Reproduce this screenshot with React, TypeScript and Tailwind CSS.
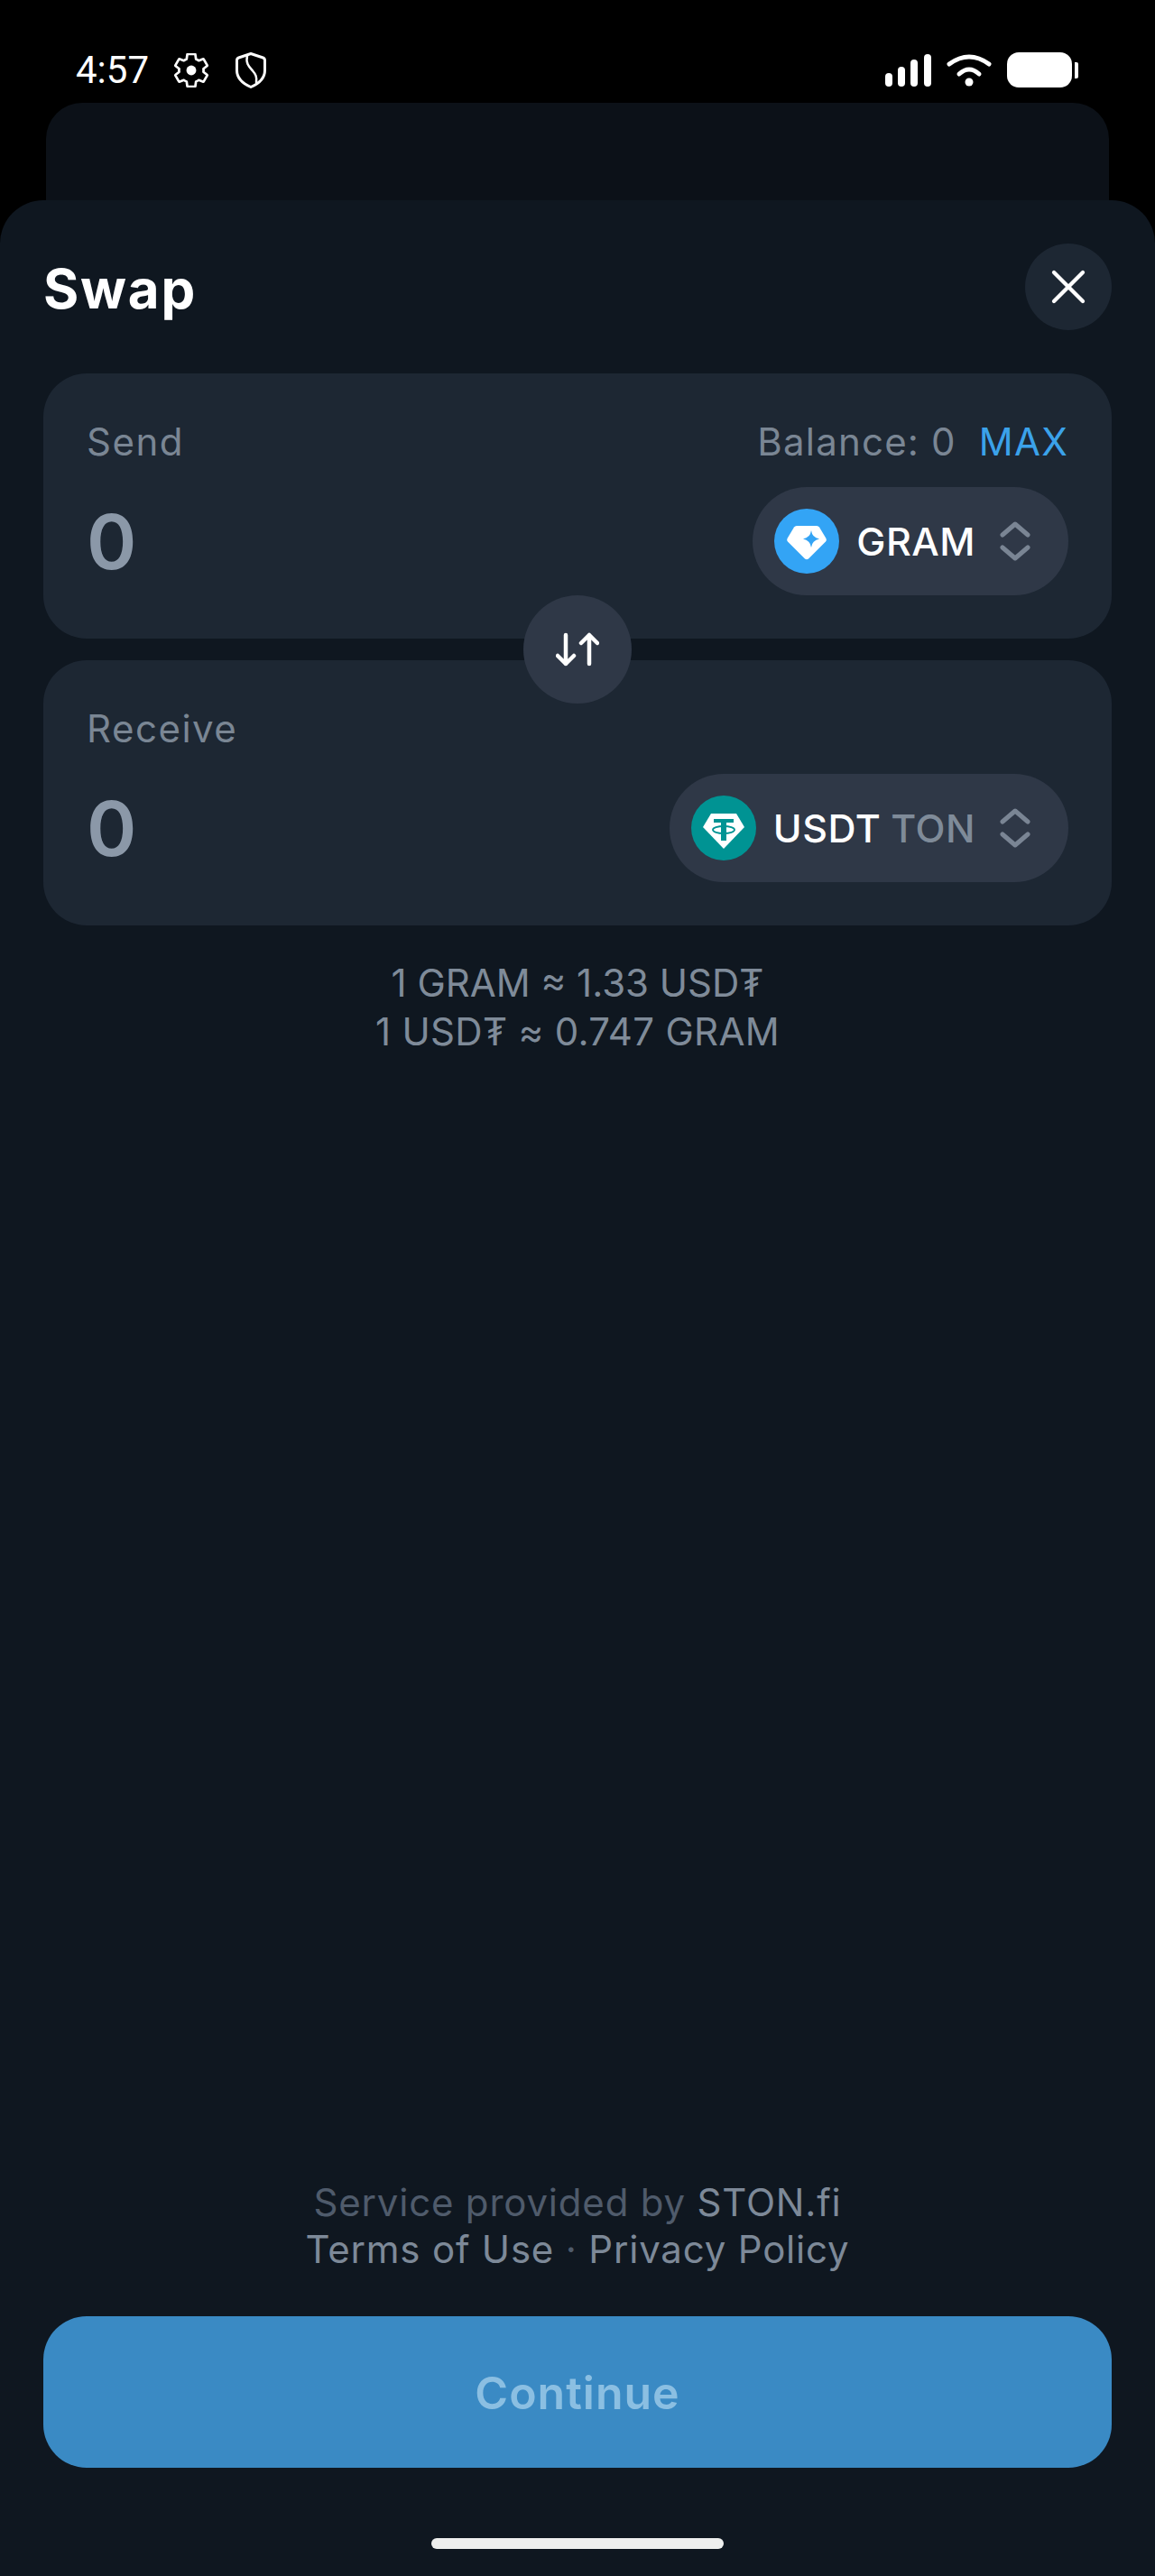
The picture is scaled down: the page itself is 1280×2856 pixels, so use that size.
import { X } from 'lucide-react'

const GEAR =
  'M19.43 12.98c.04-.32.07-.64.07-.98s-.03-.66-.07-.98l2.11-1.65c.19-.15.24-.42.12-.64l-2-3.46c-.12-.22-.39-.3-.61-.22l-2.49 1c-.52-.4-1.08-.73-1.69-.98l-.38-2.65C14.46 2.18 14.25 2 14 2h-4c-.25 0-.46.18-.49.42l-.38 2.65c-.61.25-1.17.59-1.69.98l-2.49-1c-.23-.09-.49 0-.61.22l-2 3.46c-.13.22-.07.49.12.64l2.11 1.65c-.04.32-.07.65-.07.98s.03.66.07.98l-2.11 1.65c-.19.15-.24.42-.12.64l2 3.46c.12.22.39.3.61.22l2.49-1c.52.4 1.08.73 1.69.98l.38 2.65c.03.24.24.42.49.42h4c.25 0 .46-.18.49-.42l.38-2.65c.61-.25 1.17-.59 1.69-.98l2.49 1c.23.09.49 0 .61-.22l2-3.46c.12-.22.07-.49-.12-.64l-2.11-1.65z'

const StatusBar = () => (
  <div className="flex h-[114px] shrink-0 items-start justify-between pr-[85px] pl-[84px] pt-[58px]">
    <div className="flex items-center">
      <span className="font-['Roboto',sans-serif] text-[42px] leading-[40px] text-white">
        4:57
      </span>
      <svg width="38" height="38" viewBox="1.5 1.5 21 21" className="ml-[28px]" fill="none">
        <path d={GEAR} stroke="white" strokeWidth="1.5" strokeLinejoin="round" />
        <circle cx="12" cy="12" r="3" fill="white" />
      </svg>
      <svg width="34" height="40" viewBox="0 0 34 40" className="ml-[30px]" fill="none" stroke="white" strokeWidth="3" strokeLinejoin="round" strokeLinecap="round">
        <path d="M17 1.5 30.5 6Q32.5 6.8 32.5 9V20C32.5 29 25 35 17 38.5 9 35 1.5 29 1.5 20V9Q1.5 6.8 3.5 6Z" />
        <path d="M13 4C11 12 15 16 19 20.500 22 24 24 27 23 33.500" strokeWidth="2.500" />
      </svg>
    </div>
    <div className="flex items-start">
      <svg width="51" height="38" viewBox="0 0 51 38" fill="white">
        <rect x="0" y="23" width="8" height="15" rx="4" />
        <rect x="14" y="16" width="8" height="22" rx="4" />
        <rect x="28" y="8" width="8" height="30" rx="4" />
        <rect x="43" y="2" width="8" height="36" rx="4" />
      </svg>
      <svg width="50" height="38" viewBox="0 0 50 38" className="ml-[17px]" fill="none" stroke="white" strokeWidth="5" strokeLinecap="round">
        <path d="M3 13Q25-3 47 13" />
        <path d="M14 24Q25 14 36 24" />
        <circle cx="25" cy="33" r="4.500" fill="white" stroke="none" />
      </svg>
      <div className="ml-[17px] h-[39px] w-[72px] rounded-[13px] bg-white" />
      <div className="mt-[11px] ml-[3px] h-[18px] w-[4px] rounded-r-[2px] bg-white" />
    </div>
  </div>
)

const Chevrons = () => (
  <svg width="34" height="44" viewBox="0 0 34 44" fill="none" stroke="#7a8594" strokeWidth="5" strokeLinecap="round" strokeLinejoin="round">
    <path d="M3 15 17 3 31 15" />
    <path d="M3 29 17 41 31 29" />
  </svg>
)

const GramIcon = () => (
  <svg width="72" height="72" viewBox="0 0 72 72">
    <circle cx="36" cy="36" r="36" fill="#33a4f5" />
    <path
      d="M25 19H47Q49 19 50 20.500L57.500 33Q58.500 35 57 36.500L38 55.500Q36 57 34 55.500L15 36.500Q13.500 35 14.500 33L22 20.500Q23 19 25 19Z"
      fill="white"
    />
    <path d="M41 24Q42 32 50 33.500 42 35 41 43 40 35 32 33.500 40 32 41 24Z" fill="#33a4f5" />
  </svg>
)

const TetherIcon = () => (
  <svg width="72" height="72" viewBox="0 0 72 72">
    <circle cx="36" cy="36" r="36" fill="#009393" />
    <path d="M22 20H50L59 35 36 59 13 35Z" fill="white" />
    <rect x="25" y="26" width="22" height="4" fill="#009393" />
    <rect x="33" y="30" width="6" height="20" fill="#009393" />
    <ellipse cx="36" cy="38" rx="12" ry="4" fill="none" stroke="#009393" strokeWidth="1.800" />
  </svg>
)

type TokenPillProps = {
  icon: React.ReactNode
  symbol: string
  network?: string
}

const TokenPill = ({ icon, symbol, network }: TokenPillProps) => (
  <div className="flex h-[120px] items-center rounded-full bg-[#2f3847] pr-[42px] pl-[24px]">
    {icon}
    <span className="ml-[19px] text-[43px] leading-none font-medium tracking-[0.5px] text-white">
      {symbol}
      {network && <span className="ml-[11px] text-[#7f8b99]">{network}</span>}
    </span>
    <span className="ml-[27px]">
      <Chevrons />
    </span>
  </div>
)

type SwapCardProps = {
  label: string
  right?: React.ReactNode
  pill: React.ReactNode
}

const SwapCard = ({ label, right, pill }: SwapCardProps) => (
  <div className="h-[294px] rounded-[48px] bg-[#1d2733] px-[48px] pt-[50px]">
    <div className="flex h-[52px] items-center justify-between text-[42px] leading-[52px] tracking-[1.5px] text-[#7a8694]">
      <span>{label}</span>
      {right}
    </div>
    <div className="mt-[24px] flex items-center justify-between">
      <span className="pt-[2px] text-[84px] leading-none font-semibold text-[#8b98a8]">0</span>
      {pill}
    </div>
  </div>
)

export default function App() {
  return (
    <div className="flex h-[2856px] w-[1280px] flex-col bg-black font-['Inter',sans-serif]">
      <StatusBar />
      <div className="mx-[51px] h-[108px] shrink-0 rounded-t-[40px] bg-[#0c1118]" />

      <div className="flex flex-1 flex-col rounded-t-[48px] bg-[#0f1720] px-[48px] pt-[48px] pb-[30px]">
        <div className="flex h-[96px] items-center justify-between">
          <h1 className="pt-[3px] text-[60px] font-bold tracking-[1.8px] text-white">Swap</h1>
          <button className="flex h-[96px] w-[96px] items-center justify-center rounded-full bg-[#1d2733]">
            <X size={64} color="white" strokeWidth={1.6} />
          </button>
        </div>

        <div className="relative mt-[48px] flex flex-col gap-[24px]">
          <SwapCard
            label="Send"
            right={
              <span className="tracking-[1.2px]">
                Balance: 0
                <span className="ml-[25px] text-[#3ba2ea]">MAX</span>
              </span>
            }
            pill={<TokenPill icon={<GramIcon />} symbol="GRAM" />}
          />
          <SwapCard
            label="Receive"
            pill={<TokenPill icon={<TetherIcon />} symbol="USDT" network="TON" />}
          />
          <div className="absolute top-[246px] left-[532px] flex h-[120px] w-[120px] items-center justify-center rounded-full bg-[#2f3847]">
            <svg width="48" height="38" viewBox="0 0 48 38" fill="none" stroke="white" strokeWidth="4.500" strokeLinecap="round" strokeLinejoin="round">
              <path d="M11 3V35M2 26 11 35 20 26" />
              <path d="M37 35V3M28 12 37 3 46 12" />
            </svg>
          </div>
        </div>

        <div className="mt-[37px] text-center text-[42px] leading-[54px] text-[#7f8b99]">
          <div>1 GRAM ≈ 1.33 USD₮</div>
          <div className="tracking-[0.3px]">1 USD₮ ≈ 0.747 GRAM</div>
        </div>

        <div className="mt-auto text-center text-[42px] leading-[52px] tracking-[0.8px] text-[#4f5b6b]">
          <div>
            Service provided by <span className="text-[#7d8998]">STON.fi</span>
          </div>
          <div className="text-[#7d8998]">
            Terms of Use <span className="text-[#4f5b6b]">·</span> Privacy Policy
          </div>
        </div>

        <button className="mt-[48px] h-[168px] shrink-0 rounded-[48px] bg-[#3a8ac4] pt-[2px] text-[50px] font-semibold tracking-[1px] text-[#8bbfe2]">
          Continue
        </button>

        <div className="mx-auto mt-[78px] h-[12px] w-[324px] shrink-0 rounded-full bg-[#eeefee]" />
      </div>
    </div>
  )
}
